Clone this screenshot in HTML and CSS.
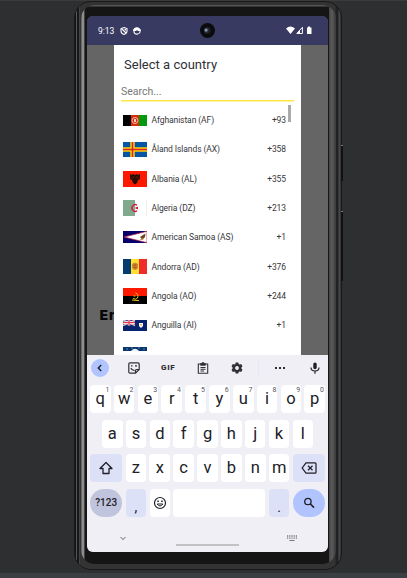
FILE: index.html
```html
<!DOCTYPE html>
<html lang="en">
<head>
<meta charset="utf-8">
<title>Select a country</title>
<link rel="stylesheet" href="styles.css">
</head>
<body>
<div class="phone">
  <i class="side-button power"></i><i class="side-button volume"></i>
  <div class="bezel">
  <div class="screen">
    <header class="status">
      <span class="time">9:13</span>
      <svg class="s-icon" viewBox="0 0 8 8"><path d="M4 .6 7 1.6V4Q7 6.500 4 7.500Q1 6.500 1 4V1.600Z M2 2 6 6" fill="none" stroke="#fff" stroke-width="1.100"/><path d="M4 2H6V4Z" fill="#fff"/></svg>
      <svg class="s-icon second" viewBox="0 0 8 8"><circle cx="4" cy="4" r="3.100" fill="none" stroke="#fff" stroke-width="1.100"/><path d="M.3 2.400Q4-.8 7.700 2.400V4H5L4 3 3 4H.3Z" fill="#fff"/></svg>
      <svg class="signals" viewBox="0 0 27 9"><path d="M0 2.500Q4.500-1.300 9 2.500L4.500 8Z M21 1.500H22V.5H24V1.500H25.500V8H21Z" fill="#fff"/><path d="M10.800 7.500H16.400V1.300Z" fill="none" stroke="#fff"/><path d="M11 7.500H14V4Z" fill="#fff"/></svg>
      <span class="camera"><i></i></span>
    </header>
    <main class="backdrop">
      <div class="behind">En</div>
      <section class="dialog">
        <h1>Select a country</h1>
        <div class="search">Search...</div>
        <div class="list">
          <i class="thumb"></i>
          <div class="row"><svg class="flag" viewBox="0 0 24 11" height="11"><path fill="#000" d="M0 0H8V11H0Z"/><path fill="#d92b0b" d="M8 0H16V11H8Z"/><path fill="#009a0c" d="M16 0H24V11H16Z"/><circle cx="12" cy="5.500" r="3" fill="none" stroke="#f5b8a8" stroke-width="1"/><path fill="#f6cabb" d="M11 4H13V7H11Z"/></svg><span>Afghanistan (AF)</span><b>+93</b></div>
          <div class="row"><svg class="flag" viewBox="0 0 24 15" height="15"><path fill="#0755a5" d="M0 0H24V15H0Z"/><path stroke="#ffd200" stroke-width="4.500" d="M9.500 0V15M0 7.500H24"/><path stroke="#d9212b" stroke-width="1.500" d="M9.500 0V15M0 7.500H24"/></svg><span>Åland Islands (AX)</span><b>+358</b></div>
          <div class="row"><svg class="flag" viewBox="0 0 24 16" height="16"><path fill="#fd1900" d="M0 0H24V16H0Z"/><path fill="#210" d="M7 3 9 4 10 3 12 4 14 3 15 4 17 3V8L15 9 14 12 12 13.500 10 12 9 9 7 8Z"/><path stroke="#a51200" stroke-width=".6" d="M10 5 11 7M14 5 13 7M8 6 10 8M16 6 14 8"/></svg><span>Albania (AL)</span><b>+355</b></div>
          <div class="row"><svg class="flag" viewBox="0 0 24 16" height="16"><path fill="#fff" d="M0 0H24V16H0Z"/><path fill="#80a98e" d="M0 0H12V16H0Z"/><path fill="#eee" d="M23 0H24V16H23Z"/><path d="M14 5.200A3.300 3.300 0 1 0 14 10.800" fill="none" stroke="#d31a3c" stroke-width="1.400"/><path fill="#d31a3c" d="M11.500 8 15 6.600V9.400Z"/></svg><span>Algeria (DZ)</span><b>+213</b></div>
          <div class="row"><svg class="flag" viewBox="0 0 24 12" height="12"><path fill="#06006b" d="M0 0H24V12H0Z"/><path fill="#fff" stroke="#b8173c" stroke-width=".7" d="M24 .3 1 6 24 11.700Z"/><path fill="#6d4426" d="M22.500 2.500 20 4 17 6 18.500 7.500 17 9 20 8.500 22 6Z"/><path fill="#d9a441" d="M18 8 21 7V8L18 9Z"/></svg><span>American Samoa (AS)</span><b>+1</b></div>
          <div class="row"><svg class="flag" viewBox="0 0 24 15" height="15"><path fill="#063b6f" d="M0 0H8V15H0Z"/><path fill="#fedf32" d="M8 0H16V15H8Z"/><path fill="#ef2c27" d="M16 0H24V15H16Z"/><path fill="#d18a29" d="M9 5Q12 2 15 5V9Q14 11 12 11Q10 11 9 9Z"/><path stroke="#a35529" stroke-width=".7" d="M10 6H14M10 8.500H14M12 5V10"/></svg><span>Andorra (AD)</span><b>+376</b></div>
          <div class="row"><svg class="flag" viewBox="0 0 24 16" height="16"><path fill="#fd1900" d="M0 0H24V8H0Z"/><path d="M0 8H24V16H0Z"/><path d="M12.500 5Q16 6 14.500 10Q13 12 10 10.500M9 12 16 12.700M10.500 8H12.500" fill="none" stroke="#ffdc16" stroke-width=".9"/></svg><span>Angola (AO)</span><b>+244</b></div>
          <div class="row"><svg class="flag" viewBox="0 0 24 11" height="11"><path fill="#05246d" d="M0 0H24V11H0Z"/><path stroke="#e8b8c4" stroke-width="1.500" d="M0 0 12 5.500M12 0 0 5.500"/><path stroke="#fff" stroke-width="2.500" d="M6 0V5.500M0 2.700H12"/><path stroke="#e23b53" stroke-width="1.300" d="M6 0V5.500M0 2.700H12"/><path fill="#fff" d="M16 3H20V6L18 8 16 6Z"/><path fill="#e5b34c" d="M17 4H19V5.500H17Z"/></svg><span>Anguilla (AI)</span><b>+1</b></div>
          <div class="row last"><svg class="flag" viewBox="0 0 24 4" height="4"><path fill="#07366e" d="M0 0H24V4H0Z"/><path fill="#eef4fa" d="M8 4Q12-.5 16 4Z"/><path stroke="#8fa8c5" stroke-width=".7" d="M3 2H5M8 1H10M15 1H17M20 2H22"/></svg></div>
        </div>
      </section>
    </main>
    <section class="keyboard">
      <div class="tools">
        <span class="back"><svg viewBox="0 0 18 18"><path d="M10.200 6 7.300 9 10.200 12" fill="none" stroke="#1b1b22" stroke-width="1.400"/></svg></span>
        <svg class="t sticker" viewBox="0 0 12 12"><path d="M2 .8H10Q11.200.8 11.200 2V7.500L7.500 11.200H2Q.8 11.200.8 10V2Q.8.8 2 .8ZM11 7.500H8.500Q7.500 7.500 7.500 8.500V11M3 6Q3.500 8.500 6.500 8.300" fill="none" stroke="#303036" stroke-width="1.200"/><path d="M3 3.300H4.500V4.500H3ZM7 3.300H9V4.500H7Z" fill="#303036"/></svg>
        <span class="gif">GIF</span>
        <svg class="t clip" viewBox="0 0 12 12"><path d="M1.300 2H10.700V11.300H1.300ZM3.500 5.500H8.500M3.500 7.200H8.500M3.500 9H7" fill="none" stroke="#303036" stroke-width="1.100"/><path d="M3.300 1H4.700Q6-.8 7.300 1H8.700V3.700H3.300Z" fill="#303036"/></svg>
        <svg class="t gear" viewBox="0 0 12 12"><path fill="#303036" fill-rule="evenodd" d="M4.700.5H7.300L7.700 2 8.700 2.500 10.200 2.100 11.500 4.300 10.400 5.400V6.600L11.500 7.700 10.200 9.900 8.700 9.500 7.700 10 7.300 11.500H4.700L4.300 10 3.300 9.500 1.800 9.900.5 7.700 1.600 6.600V5.400L.5 4.300 1.800 2.100 3.300 2.500 4.300 2ZM6 4.100A1.900 1.900 0 1 0 6 7.900 1.900 1.900 0 1 0 6 4.100Z"/></svg>
        <i class="divider"></i>
        <svg class="t more" viewBox="0 0 12 12"><path fill="#303036" d="M1 5H3V7H1ZM5 5H7V7H5ZM9 5H11V7H9Z"/></svg>
        <svg class="t mic" viewBox="0 0 12 12"><rect x="4.300" y=".4" width="3.400" height="6.800" rx="1.700" fill="#202026"/><path d="M2 5.500Q2 9 6 9T10 5.500M6 9V11.800" fill="none" stroke="#202026" stroke-width="1.200"/></svg>
      </div>
      <div class="keys"><div class="key">q<sup>1</sup></div><div class="key">w<sup>2</sup></div><div class="key">e<sup>3</sup></div><div class="key">r<sup>4</sup></div><div class="key">t<sup>5</sup></div><div class="key">y<sup>6</sup></div><div class="key">u<sup>7</sup></div><div class="key">i<sup>8</sup></div><div class="key">o<sup>9</sup></div><div class="key">p<sup>0</sup></div></div>
      <div class="keys inset"><div class="key">a</div><div class="key">s</div><div class="key">d</div><div class="key">f</div><div class="key">g</div><div class="key">h</div><div class="key">j</div><div class="key">k</div><div class="key">l</div></div>
      <div class="keys"><div class="key wide tint"><svg class="ki" viewBox="0 0 16 14"><path d="M8 1.500 14 7.500H11V12.500H5V7.500H2Z" fill="none" stroke="#202026" stroke-width="1.300" stroke-linejoin="round"/></svg></div><div class="key">z</div><div class="key">x</div><div class="key">c</div><div class="key">v</div><div class="key">b</div><div class="key">n</div><div class="key">m</div><div class="key wide tint"><svg class="ki" viewBox="0 0 16 14"><path d="M5 1.800H14Q15 1.800 15 2.800V11.200Q15 12.200 14 12.200H5L1.200 7ZM7 4.700 11.500 9.300M11.500 4.700 7 9.300" fill="none" stroke="#202026" stroke-width="1.250"/></svg></div></div>
      <div class="keys"><div class="key wide symbols">?123</div><div class="key tint punct">,</div><div class="key"><svg class="ki" viewBox="0 0 16 14"><circle cx="8" cy="7" r="5.500" fill="none" stroke="#202026" stroke-width="1.200"/><path d="M5.100 8Q8 12 10.900 8Z" fill="none" stroke="#202026"/><path d="M5.300 4.600H6.800V6H5.300ZM9.200 4.600H10.700V6H9.200Z" fill="#202026"/></svg></div><div class="key space"></div><div class="key tint punct">.</div><div class="key wide find"><svg class="ki" viewBox="0 0 16 14"><circle cx="6.900" cy="5.500" r="3.200" fill="none" stroke="#202026" stroke-width="1.300"/><path d="M9.200 7.800 13 11.600" stroke="#202026" stroke-width="1.600"/></svg></div></div>
      <div class="nav">
        <svg class="down" viewBox="0 0 6 5"><path d="M.6 1 3 3.600 5.400 1" fill="none" stroke="#555" stroke-width=".9"/></svg>
        <i class="handle"></i>
        <svg class="board" viewBox="0 0 10 7"><path d="M0 1H10M0 3.200H10" stroke="#777" stroke-width="1.300" stroke-dasharray="1.200 1"/><path d="M2.500 5.500H7.500" stroke="#777" stroke-width="1.200"/></svg>
      </div>
    </section>
  </div>
  </div>
</div>
<div class="strip"></div>
</body>
</html>
```

FILE: styles.css
```css
* { box-sizing: border-box; }
body {
  margin: 0;
  width: 407px;
  height: 578px;
  overflow: hidden;
  background: #2e2f31;
  border-top: 1px solid #3a3b3d;
  font-family: Roboto, sans-serif;
  color: #303034;
  display: flex;
  flex-direction: column;
}
svg { display: block; flex: none; }
.phone {
  position: relative;
  width: 268px;
  height: 569px;
  margin-left: 74px;
  padding: 3px 5px 5px 6px;
  border-radius: 17px;
  border: 1px solid #191919;
  background: linear-gradient(90deg, #161616 0 1px, #555 1px 2px, #181818 2px 4px, #444 4px 5px, #333 5px 260px, #222 261px 263px, #484848 264px 265px, #222 266px);
}
.bezel {
  height: 100%;
  border-radius: 14px;
  padding: 11px 8px 12px 6px;
  background: linear-gradient(#555 0 1px, #151515 2px 100%) 4px 0 / 244px 100% no-repeat, linear-gradient(90deg, #555 0, #a0a0a0 2px, #777 3px, #111 4px 247px, #444 248px, #5b5b5b 251px, #383838 255px);
}
.side-button { position: absolute; right: -2px; width: 2px; background: #111; border-top: 1px solid #777; }
.power { top: 143px; height: 36px; }
.volume { top: 209px; height: 70px; }
.strip { height: 5px; margin-top: auto; background: #3b3f43; }
.screen {
  width: 241px;
  height: 536px;
  border-radius: 6px;
  overflow: hidden;
  background: #656565;
  display: flex;
  flex-direction: column;
}
.status {
  position: relative;
  height: 29px;
  flex: none;
  display: flex;
  align-items: center;
  padding: 0 15px 0 11px;
  background: #383a62;
  color: #fff;
}
.time { width: 22px; font-size: 8.500px; line-height: 10px; }
.s-icon { width: 8px; height: 8px; }
.second { margin-left: 5px; }
.signals { width: 27px; height: 9px; margin-left: auto; }
.camera {
  position: absolute;
  left: 113px;
  top: 7px;
  width: 15px;
  height: 15px;
  border-radius: 50%;
  background: #0b0b0d;
  display: grid;
  place-items: center;
}
.camera i { width: 7px; height: 7px; border-radius: 50%; background: radial-gradient(circle at 30% 45%, #8392a2 0 1px, #26313d 2px, #17191d 4px); }
.backdrop { height: 310px; flex: none; display: flex; }
.behind {
  width: 27px;
  padding: 262px 0 0 12px;
  overflow: hidden;
  flex: none;
  color: #080808;
  font: bold 14px/16px "DejaVu Sans", sans-serif;
}
.dialog { width: 187px; background: #fff; overflow: hidden; }
h1 { margin: 11px 0 0 10px; font-size: 13px; line-height: 18px; font-weight: 400; letter-spacing: .02px; white-space: nowrap; }
.search {
  width: 173px;
  height: 17px;
  margin: 10px 0 0 7px;
  border-bottom: 1px solid #ffe546;
  box-shadow: 0 .5px 0 #ffe546;
  color: #777;
  font-size: 10.500px;
  line-height: 16px;
}
.list { position: relative; padding: 4.500px 15px 0 9px; }
.thumb { position: absolute; right: 10px; top: 4px; width: 3px; height: 17px; background: #aaa; }
.row { height: 29.300px; display: flex; align-items: center; font-size: 8.500px; line-height: 12px; letter-spacing: -.09px; color: #38383c; }
.flag { width: 24px; margin-right: 4.500px; }
.row b { margin-left: auto; font-weight: 400; }
.row.last { height: 12px; padding-top: 7px; align-items: flex-start; }
.keyboard { height: 197px; background: #f0eff6; padding: 4px 3px 0; }
.tools { height: 18px; margin-bottom: 8px; display: flex; align-items: center; }
.back { width: 18px; height: 18px; margin-left: 1px; border-radius: 50%; background: #b1c4ff; }
.t { width: 12px; height: 12px; }
.sticker { margin-left: 19px; }
.gif { width: 16px; margin-left: 21px; font-size: 8px; line-height: 10px; font-weight: 900; letter-spacing: .7px; }
.clip { margin-left: 20px; }
.gear { margin-left: 22px; }
.divider { width: 1px; height: 16px; margin-left: 15px; background: #e8e8f0; }
.more { margin-left: 15px; }
.mic { margin-left: 22.500px; }
.keys { display: flex; gap: 3.300px; height: 28px; margin-bottom: 6.700px; }
.inset { padding: 0 12px; }
.key {
  position: relative;
  flex: 1 1 0;
  height: 28px;
  border-radius: 4px;
  background: #fff;
  color: #202026;
  display: flex;
  align-items: center;
  justify-content: center;
  font-size: 16.500px;
  line-height: 26px;
}
.key sup { position: absolute; right: 1px; top: 2px; font-size: 7px; line-height: 7px; color: #55555c; }
.wide { flex: none; width: 32.300px; }
.tint { background: #dde1f8; }
.ki { width: 16px; height: 14px; }
.symbols { background: #c0c5dd; border-radius: 14px; font-size: 10px; font-weight: 500; }
.space { flex: none; width: 92px; }
.punct { padding-top: 7px; font-size: 14px; }
.find { background: #b1c4ff; border-radius: 14px; }
.nav { height: 30px; display: flex; padding-left: 30px; }
.down { width: 6px; height: 5px; margin-top: 12px; }
.handle { width: 63px; height: 2px; margin: 20px 0 0 50px; background: #c2c2c5; }
.board { width: 10px; height: 7px; margin: 11px 0 0 48px; }
```
